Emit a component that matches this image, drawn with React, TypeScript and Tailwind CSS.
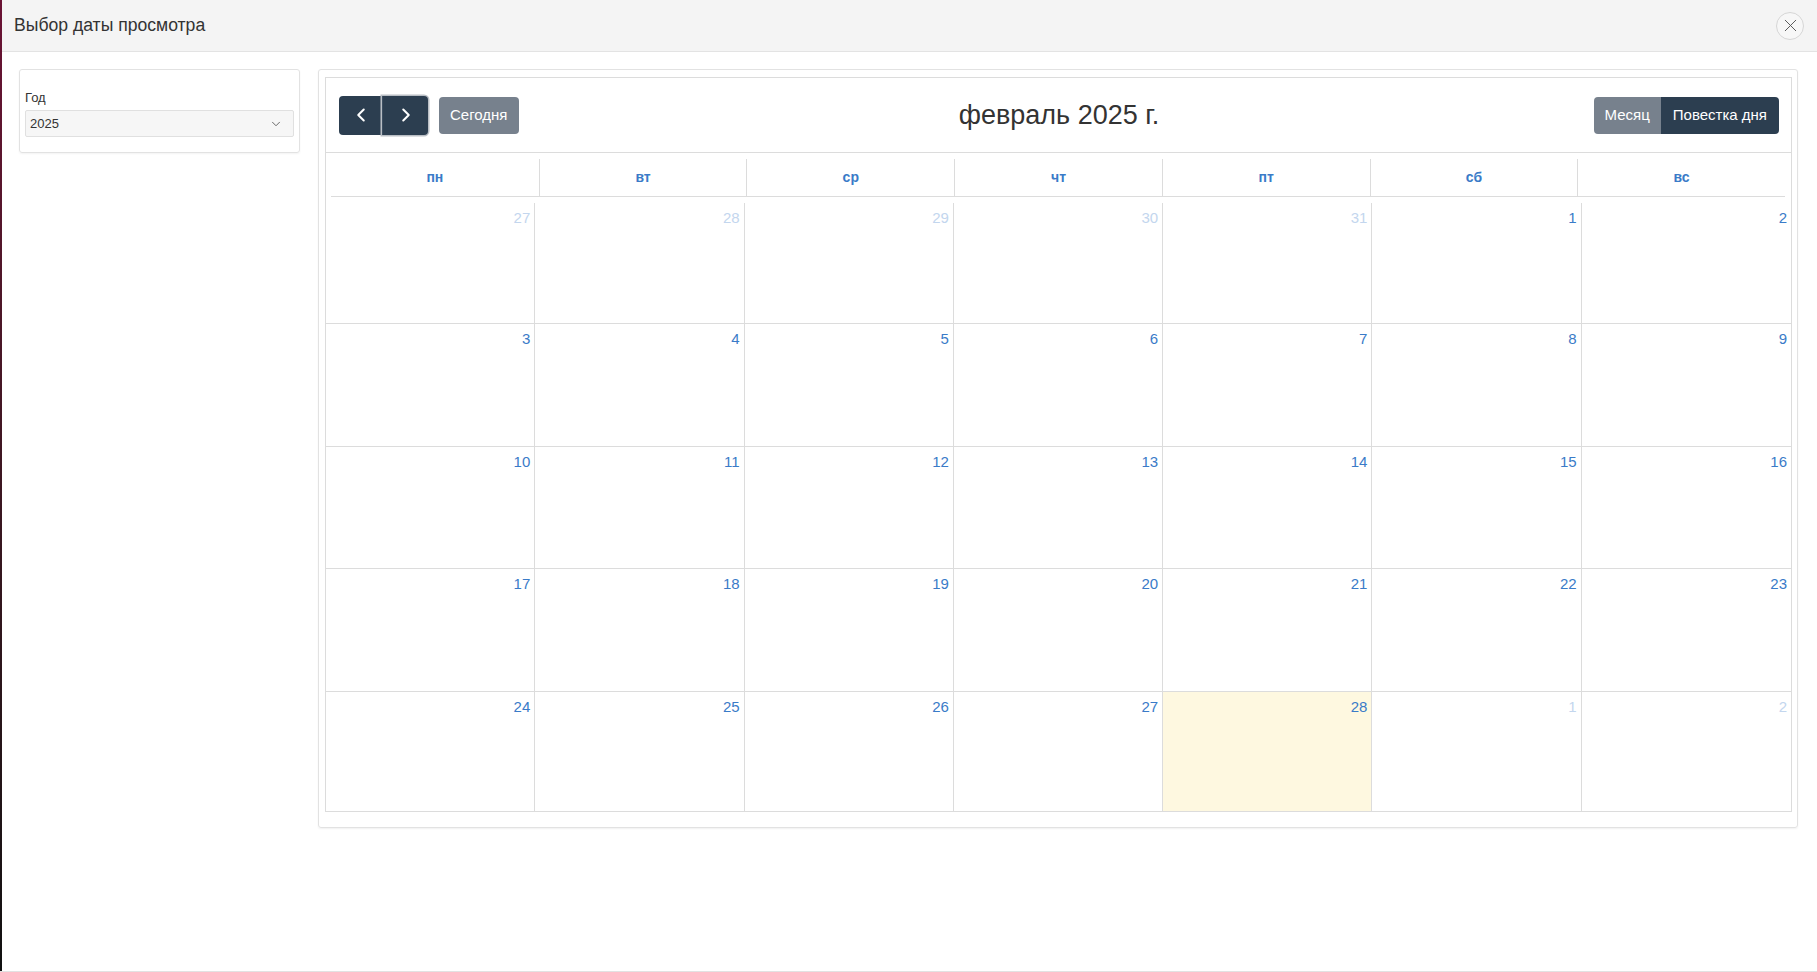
import { ChevronDown, ChevronLeft, ChevronRight, X } from 'lucide-react';

type Day = { n: number; other?: boolean; today?: boolean };

const WEEKDAYS = ['пн', 'вт', 'ср', 'чт', 'пт', 'сб', 'вс'];

const WEEKS: Day[][] = [
  [{ n: 27, other: true }, { n: 28, other: true }, { n: 29, other: true }, { n: 30, other: true }, { n: 31, other: true }, { n: 1 }, { n: 2 }],
  [3, 4, 5, 6, 7, 8, 9].map((n) => ({ n })),
  [10, 11, 12, 13, 14, 15, 16].map((n) => ({ n })),
  [17, 18, 19, 20, 21, 22, 23].map((n) => ({ n })),
  [{ n: 24 }, { n: 25 }, { n: 26 }, { n: 27 }, { n: 28, today: true }, { n: 1, other: true }, { n: 2, other: true }],
];

export default function App() {
  return (
    <div className="flex h-[972px] w-full bg-white text-[#333] font-['Liberation_Sans',Arial,sans-serif] border-b border-[#e2e2e2]">
      {/* backdrop edge */}
      <div className="w-[2px] shrink-0 bg-gradient-to-b from-[#6a1234] to-[#111]" />

      <div className="flex-1 flex flex-col min-w-0">
        {/* Header */}
        <div className="h-[52px] shrink-0 flex items-center justify-between pl-[12px] pr-[13px] bg-[#f4f4f4] border-b border-[#e3e3e3]">
          <h1 className="text-[17.6px] leading-none text-[#333]">Выбор даты просмотра</h1>
          <button type="button" className="w-[28px] h-[28px] rounded-full border border-[#d6d6d6] flex items-center justify-center text-[#555] bg-[#f7f7f7]">
            <X size={21} strokeWidth={1.1} />
          </button>
        </div>

        {/* Body */}
        <div className="flex items-start gap-[18px] pl-[17px] pr-[19px] pt-[17px]">
          {/* Year filter */}
          <div className="w-[281px] shrink-0 border border-[#e2e2e2] rounded-[3px] shadow-[0_1px_2px_rgba(0,0,0,0.05)] px-[5px] pt-[20px] pb-[15px]">
            <label className="block text-[13px] leading-[15px] text-[#333] mb-[5px]">Год</label>
            <div className="h-[27px] flex items-center justify-between pl-[4px] pr-[10px] bg-[#f6f6f6] border border-[#e0e0e0] rounded-[2px]">
              <span className="text-[13px] text-[#333]">2025</span>
              <ChevronDown size={14} strokeWidth={1.5} className="text-[#555]" />
            </div>
          </div>

          {/* Calendar */}
          <div className="flex-1 min-w-0 border border-[#e2e2e2] rounded-[3px] shadow-[0_1px_2px_rgba(0,0,0,0.06)] pl-[6px] pt-[7px] pr-[5px] pb-[15px]">
            <div className="border border-[#dcdcdc]">
              {/* Toolbar */}
              <div className="h-[75px] flex items-center justify-between pl-[13px] pr-[12px] border-b border-[#dcdcdc]">
                <div className="flex items-center gap-[11px] w-[300px]">
                  <div className="flex">
                    <button type="button" className="w-[43px] h-[39px] bg-[#2c3e50] rounded-l-[4px] flex items-center justify-center text-white">
                      <ChevronLeft size={22} strokeWidth={2.2} />
                    </button>
                    <button type="button" className="w-[46px] h-[39px] bg-[#2c3e50] rounded-r-[4px] flex items-center justify-center text-white border-l border-[#3d4f62] shadow-[0_0_0_1.5px_#b9bec4]">
                      <ChevronRight size={22} strokeWidth={2.2} />
                    </button>
                  </div>
                  <button type="button" className="h-[37px] px-[11px] bg-[#77818d] rounded-[4px] text-white text-[15px]">Сегодня</button>
                </div>

                <h2 className="text-[27px] leading-none text-[#333]">февраль 2025 г.</h2>

                <div className="flex w-[300px] justify-end">
                  <button type="button" className="h-[37px] px-[11px] bg-[#77818d] rounded-l-[4px] text-white text-[15px]">Месяц</button>
                  <button type="button" className="h-[37px] px-[12px] bg-[#2c3e50] rounded-r-[4px] text-white text-[15px]">Повестка дня</button>
                </div>
              </div>

              {/* Weekday header */}
              <div className="pl-[5px] pr-[6px] pt-[6px]">
                <div className="grid grid-cols-7 border-b border-[#dcdcdc]">
                  {WEEKDAYS.map((d, i) => (
                    <div key={d} className={`h-[37px] flex items-center justify-center text-[14px] font-bold text-[#3a7bc8] ${i > 0 ? 'border-l border-[#dcdcdc]' : ''}`}>
                      {d}
                    </div>
                  ))}
                </div>
              </div>

              {/* Month grid */}
              <div className="mt-[6px] grid grid-cols-7 grid-rows-[121px_123px_122px_123px_119px]">
                {WEEKS.map((week, wi) =>
                  week.map((day, di) => (
                    <div
                      key={`${wi}-${di}`}
                      className={`flex justify-end items-start pt-[6px] pr-[4px] ${di < 6 ? 'border-r border-[#dcdcdc]' : ''} ${wi < 4 ? 'border-b border-[#dcdcdc]' : ''} ${day.today ? 'bg-[#fef8e0]' : ''}`}
                    >
                      <span className={`text-[15px] leading-[17px] ${day.other ? 'text-[#c3d6ee]' : 'text-[#3a7bc8]'}`}>{day.n}</span>
                    </div>
                  ))
                )}
              </div>
            </div>
          </div>
        </div>
      </div>
    </div>
  );
}
